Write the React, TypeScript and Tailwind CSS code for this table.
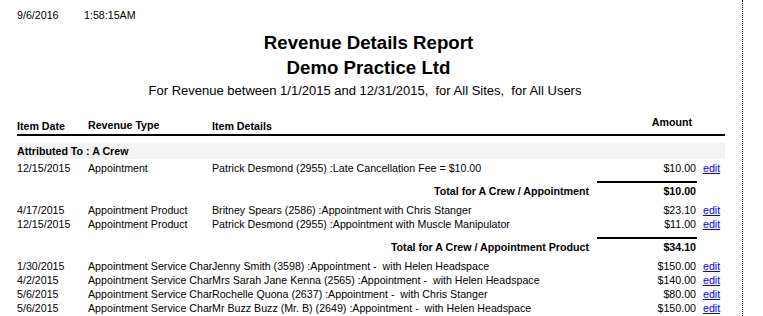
import React from 'react';

type Line = {
  date: string;
  type: string;
  details: string;
  amount: string;
};

type Group = {
  lines: Line[];
  total?: { label: string; amount: string };
};

const groups: Group[] = [
  {
    lines: [
      {
        date: '12/15/2015',
        type: 'Appointment',
        details: 'Patrick Desmond (2955) :Late Cancellation Fee = $10.00',
        amount: '$10.00',
      },
    ],
    total: { label: 'Total for A Crew / Appointment', amount: '$10.00' },
  },
  {
    lines: [
      {
        date: '4/17/2015',
        type: 'Appointment Product',
        details: 'Britney Spears (2586) :Appointment with Chris Stanger',
        amount: '$23.10',
      },
      {
        date: '12/15/2015',
        type: 'Appointment Product',
        details: 'Patrick Desmond (2955) :Appointment with Muscle Manipulator',
        amount: '$11.00',
      },
    ],
    total: { label: 'Total for A Crew / Appointment Product', amount: '$34.10' },
  },
  {
    lines: [
      {
        date: '1/30/2015',
        type: 'Appointment Service Charge',
        details: 'Jenny Smith (3598) :Appointment -  with Helen Headspace',
        amount: '$150.00',
      },
      {
        date: '4/2/2015',
        type: 'Appointment Service Charge',
        details: 'Mrs Sarah Jane Kenna (2565) :Appointment -  with Helen Headspace',
        amount: '$140.00',
      },
      {
        date: '5/6/2015',
        type: 'Appointment Service Charge',
        details: 'Rochelle Quona (2637) :Appointment -  with Chris Stanger',
        amount: '$80.00',
      },
      {
        date: '5/6/2015',
        type: 'Appointment Service Charge',
        details: 'Mr Buzz Buzz (Mr. B) (2649) :Appointment -  with Helen Headspace',
        amount: '$150.00',
      },
    ],
  },
];

const ItemRow: React.FC<{ line: Line }> = ({ line }) => (
  <div className="flex h-[14px] items-center leading-[14px] whitespace-pre">
    <div className="w-[71px]">{line.date}</div>
    <div className="w-[124px] overflow-hidden">{line.type}</div>
    <div className="w-[388px] overflow-hidden">{line.details}</div>
    <div className="w-[96px] text-right">{line.amount}</div>
    <a href="#" className="ml-[7px] text-[#0000ff] underline">
      edit
    </a>
  </div>
);

const App: React.FC = () => {
  return (
    <div
      className="h-[316px] w-[743px] overflow-hidden border-r border-dotted border-black bg-white text-[10.67px] text-black"
      style={{ fontFamily: '"Liberation Sans", Arial, sans-serif' }}
    >
      <div className="flex pl-[17px] pt-[8px] leading-[14px]">
        <span className="w-[67px]">9/6/2016</span>
        <span>1:58:15AM</span>
      </div>

      <div className="mt-[8px] w-[737px] text-center">
        <div className="text-[18.67px] leading-[25px] font-bold">Revenue Details Report</div>
        <div className="text-[18.67px] leading-[25px] font-bold">Demo Practice Ltd</div>
        <div className="pr-[7px] text-[13px] leading-[22px] whitespace-pre">
          For Revenue between 1/1/2015 and 12/31/2015,  for All Sites,  for All Users
        </div>
      </div>

      <div className="ml-[17px] w-[708px]">
        <div className="mt-[17px] flex h-[17px] items-end border-b-2 border-black pb-[1px] font-bold leading-[14px]">
          <div className="w-[71px]">Item Date</div>
          <div className="mb-[1px] w-[124px]">Revenue Type</div>
          <div className="w-[388px]">Item Details</div>
          <div className="mb-[4px] w-[92px] text-right">Amount</div>
        </div>

        <div className="mt-[7px] flex h-[16px] items-center bg-[#f3f3f3] font-bold leading-[14px]">
          Attributed To : A Crew
        </div>

        <div className="mt-[2px]">
          {groups.map((group, gi) => (
            <div key={gi}>
              {group.lines.map((line, li) => (
                <ItemRow key={li} line={line} />
              ))}
              {group.total && (
                <div className="mt-[6px] mb-[5px] flex font-bold leading-[14px]">
                  <div className="w-[572px] pt-[3px] text-right">{group.total.label}</div>
                  <div className="ml-[8px] w-[100px] border-t-2 border-black pt-[1px] pr-[1px] text-right">
                    {group.total.amount}
                  </div>
                </div>
              )}
            </div>
          ))}
        </div>
      </div>
    </div>
  );
};

export default App;
